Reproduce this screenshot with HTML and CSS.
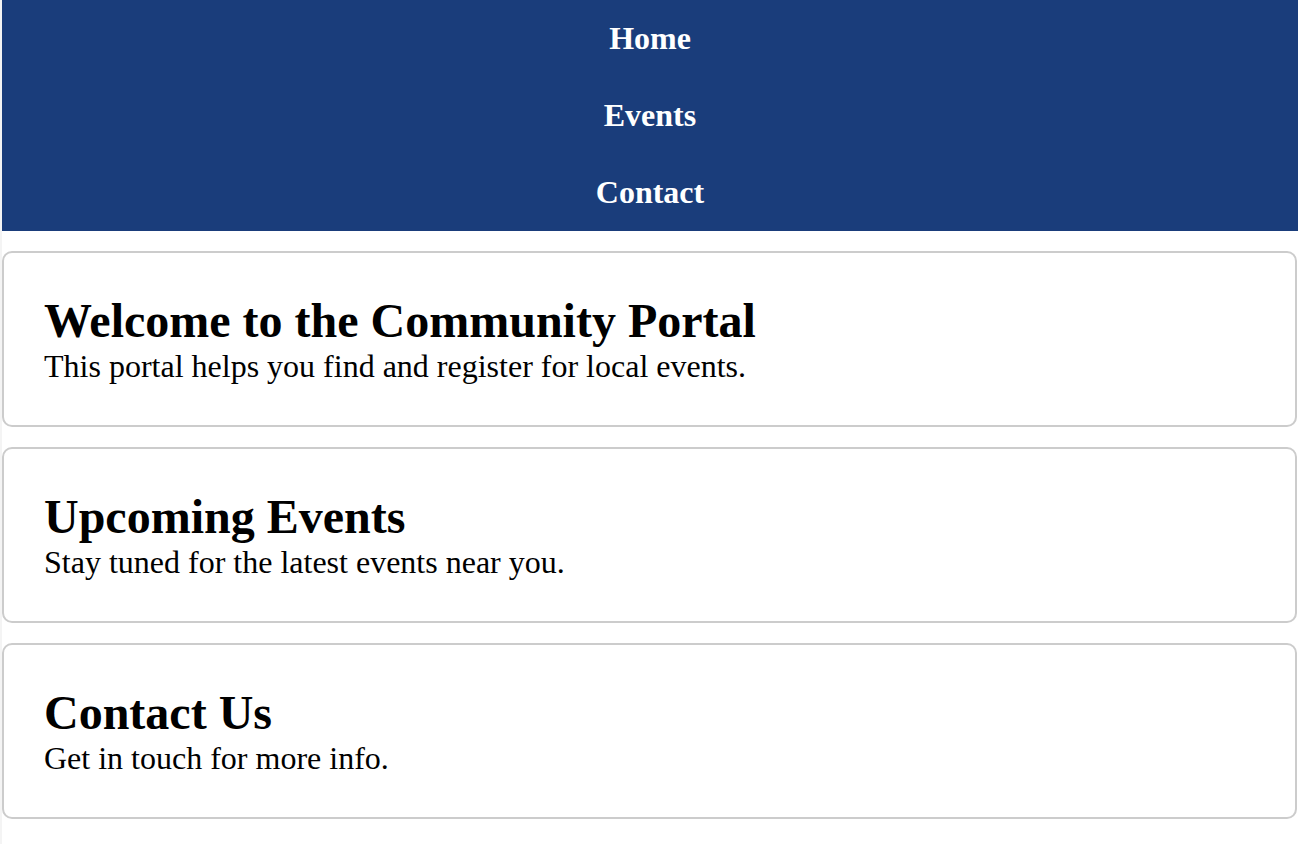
FILE: index.html
```html
<!DOCTYPE html>
<html lang="en">
<head>
<meta charset="utf-8">
<title>Community Portal</title>
<link rel="stylesheet" href="styles.css">
</head>
<body>
<div class="page">
  <nav class="nav">
    <a class="nav-link" href="#home">Home</a>
    <a class="nav-link" href="#events">Events</a>
    <a class="nav-link" href="#contact">Contact</a>
  </nav>
  <main class="content">
    <section class="card" id="home">
      <h2 class="card-title">Welcome to the Community Portal</h2>
      <p class="card-text">This portal helps you find and register for local events.</p>
    </section>
    <section class="card" id="events">
      <h2 class="card-title">Upcoming Events</h2>
      <p class="card-text">Stay tuned for the latest events near you.</p>
    </section>
    <section class="card" id="contact">
      <h2 class="card-title">Contact Us</h2>
      <p class="card-text">Get in touch for more info.</p>
    </section>
  </main>
</div>
</body>
</html>
```

FILE: styles.css
```css
html, body {
  margin: 0;
  padding: 0;
}

body {
  background: #f4f4f4;
  font-family: "Liberation Serif", "Times New Roman", serif;
  font-size: 32px;
  color: #000;
}

.page {
  margin-left: 2px;
  min-height: 844px;
  background: #fff;
}

.nav {
  display: flex;
  flex-direction: column;
  background: #1a3d7b;
}

.nav-link {
  display: block;
  padding: 20px 0;
  text-align: center;
  color: #fff;
  font-weight: bold;
  text-decoration: none;
}

.content {
  display: flex;
  flex-direction: column;
  gap: 20px;
  padding-top: 20px;
  margin-right: 1px;
}

.card {
  border: 2px solid #cccccc;
  border-radius: 10px;
  padding: 40px;
  background: #fff;
}

.card-title {
  margin: 0;
  font-size: 48px;
  font-weight: bold;
}

.card-text {
  margin: 0;
  font-size: 32px;
}
```
